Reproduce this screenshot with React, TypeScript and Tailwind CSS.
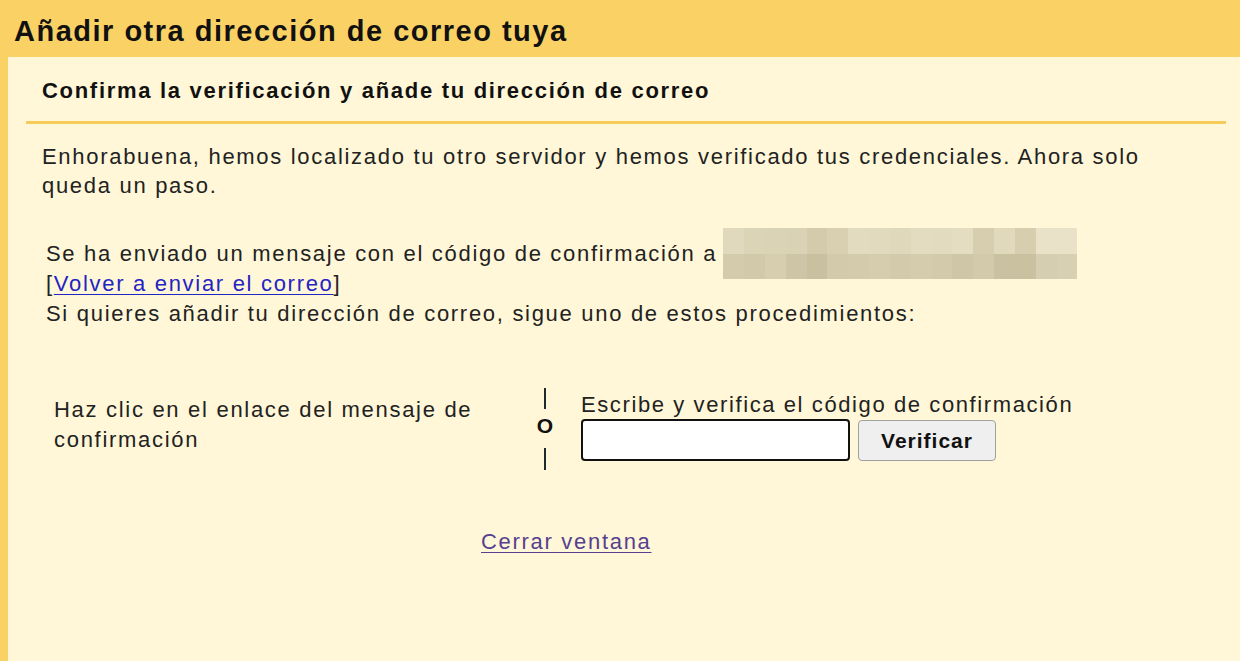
import React from 'react'

const topRow = [
  '#e0d9bd', '#dcd4b6', '#dbd3b5', '#dad2b4', '#d3cbab', '#d8d0b1', '#e2dbbf', '#e1dabe', '#dfd8bb',
  '#e3dcc1', '#e2dbbf', '#e4ddc2', '#d6ceaf', '#e0d9bc', '#d6ceaf', '#e9e2c8', '#e9e2c8',
]
const bottomRow = [
  '#d3cbac', '#d1c9a9', '#d6ceaf', '#cdc5a5', '#c9c09f', '#d2caab', '#d3cbac', '#d5cdae', '#d2caab',
  '#d4ccad', '#d2caab', '#cec6a6', '#d2caab', '#cac1a0', '#cac1a0', '#d6ceb0', '#d8d0b2',
]

// blurred-out email address
const Pixelated = () => (
  <span className="flex flex-col shrink-0 w-[354px] h-[51px] ml-[6px] -my-[11px]">
    <span className="flex flex-1">
      {topRow.map((c, i) => (
        <span key={i} className="flex-1" style={{ backgroundColor: c }} />
      ))}
    </span>
    <span className="flex flex-1">
      {bottomRow.map((c, i) => (
        <span key={i} className="flex-1" style={{ backgroundColor: c }} />
      ))}
    </span>
  </span>
)

export default function App() {
  return (
    <div className="w-[1240px] h-[661px] overflow-hidden bg-[#fff7d7] text-[#222] font-['Liberation_Sans',Arial,sans-serif] flex flex-col">
      <div className="h-[57px] bg-[#fad165] flex items-center px-[14px] shrink-0">
        <h1 className="text-[29px] font-bold tracking-[1.5px] text-[#111] leading-none pt-[5px]">
          Añadir otra dirección de correo tuya
        </h1>
      </div>
      <div className="flex-1 border-l-[8px] border-[#fad165] text-[22px] tracking-[1.7px]">
        <h2 className="pl-[34px] pt-[19px] font-bold text-[#111] leading-[29px]">
          Confirma la verificación y añade tu dirección de correo
        </h2>
        <div className="ml-[18px] mr-[14px] h-[3px] bg-[#f7cb5a] mt-[16px]" />
        <p className="pl-[34px] pr-[52px] pt-[18px] leading-[29px]">
          Enhorabuena, hemos localizado tu otro servidor y hemos verificado tus credenciales. Ahora solo
          queda un paso.
        </p>
        <div className="pl-[38px] pt-[38px] leading-[30px]">
          <div className="flex items-center h-[31px]">
            <span>Se ha enviado un mensaje con el código de confirmación a</span>
            <Pixelated />
          </div>
          <div>
            [<a href="#" className="text-[#2424c4] underline underline-offset-[3px] decoration-1">Volver a enviar el correo</a>]
          </div>
          <div>Si quieres añadir tu dirección de correo, sigue uno de estos procedimientos:</div>
        </div>
        <div className="flex items-start pt-[59px]">
          <div className="w-[492px] pl-[46px] mt-[7px] leading-[30px]">
            Haz clic en el enlace del mensaje de confirmación
          </div>
          <div className="w-[81px] pl-[9px] flex flex-col items-center">
            <span className="block w-[2px] h-[21px] bg-[#1d2a30]" />
            <span className="block font-bold text-[21px] leading-[20px] tracking-normal mt-[7px] text-[#111]">O</span>
            <span className="block w-[2px] h-[22px] bg-[#1d2a30] mt-[12px]" />
          </div>
          <div className="flex flex-col">
            <div className="leading-[24px] mt-[5px] tracking-[1.6px]">Escribe y verifica el código de confirmación</div>
            <div className="flex items-start gap-[8px] mt-[2px]">
              <input
                type="text"
                className="w-[269px] h-[42px] bg-white border-[2.5px] border-[#111] rounded-[4px] outline-none"
              />
              <button className="w-[138px] h-[41px] mt-[1px] bg-[#efefef] border border-[#a0a0a0] rounded-[4px] text-[21px] font-bold tracking-[1px] text-[#111]">
                Verificar
              </button>
            </div>
          </div>
        </div>
        <div className="pt-[57px] leading-[30px] pl-[473px]">
          <a href="#" className="text-[#56408f] underline underline-offset-[3px] decoration-1">Cerrar ventana</a>
        </div>
      </div>
    </div>
  )
}
